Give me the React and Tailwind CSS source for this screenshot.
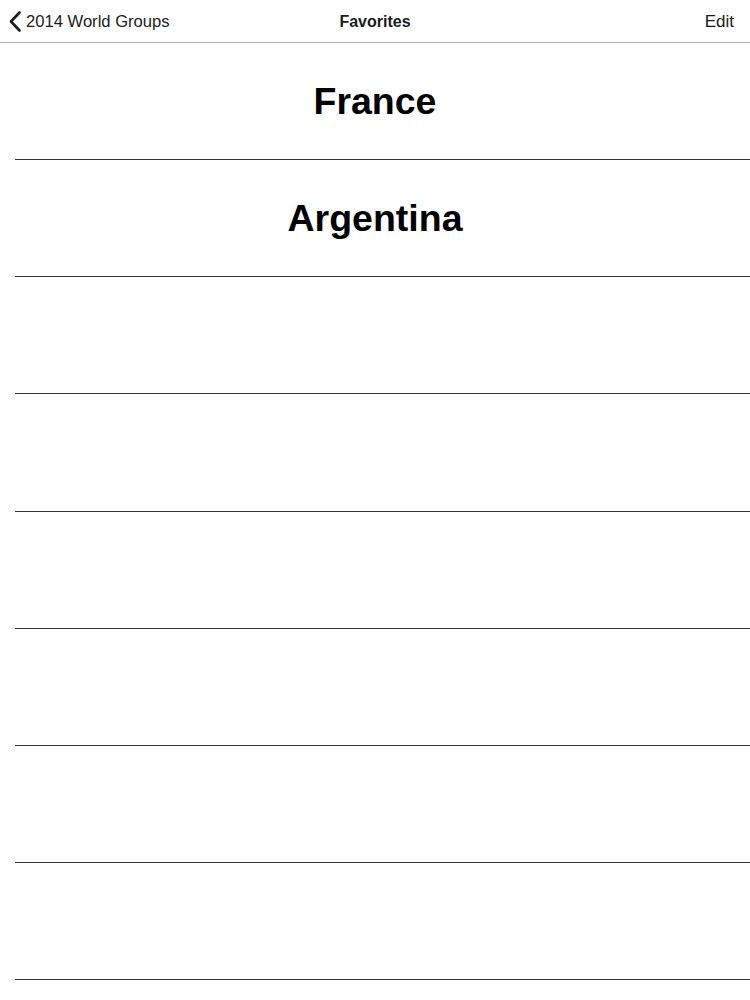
import React from "react";

const teams = ["France", "Argentina", "", "", "", "", "", ""];

const App = () => {
  return (
    <div className="w-[750px] h-[1000px] bg-white overflow-hidden font-['Liberation_Sans',Arial,sans-serif]">
      {/* nav bar */}
      <div className="h-[43px] border-b border-[#b4b4b4] flex items-center justify-between relative text-[#1c1c1c]">
        <div className="flex items-center pl-[9px] pt-[2px]">
          <svg width="12" height="21" viewBox="0 0 12 21" className="mr-[5px]">
            <path d="M10.5 1.5 L2 10.5 L10.5 19.5" fill="none" stroke="#1c1c1c" strokeWidth="2.6" strokeLinecap="round" strokeLinejoin="round" />
          </svg>
          <span className="text-[16.6px]">2014 World Groups</span>
        </div>
        <span className="absolute left-1/2 -translate-x-1/2 text-[16px] font-bold pt-[2px]">Favorites</span>
        <span className="text-[17px] pr-[16px] pt-[2px]">Edit</span>
      </div>

      {/* favorites list */}
      <div className="flex flex-col">
        {teams.map((name, i) => (
          <div key={i} className="flex flex-col">
            <div className="h-[116.14px] flex items-center justify-center">
              <span className="text-[37.5px] font-bold text-black">{name}</span>
            </div>
            <div className="h-px ml-[15px] bg-[#333]" />
          </div>
        ))}
      </div>
    </div>
  );
};

export default App;
